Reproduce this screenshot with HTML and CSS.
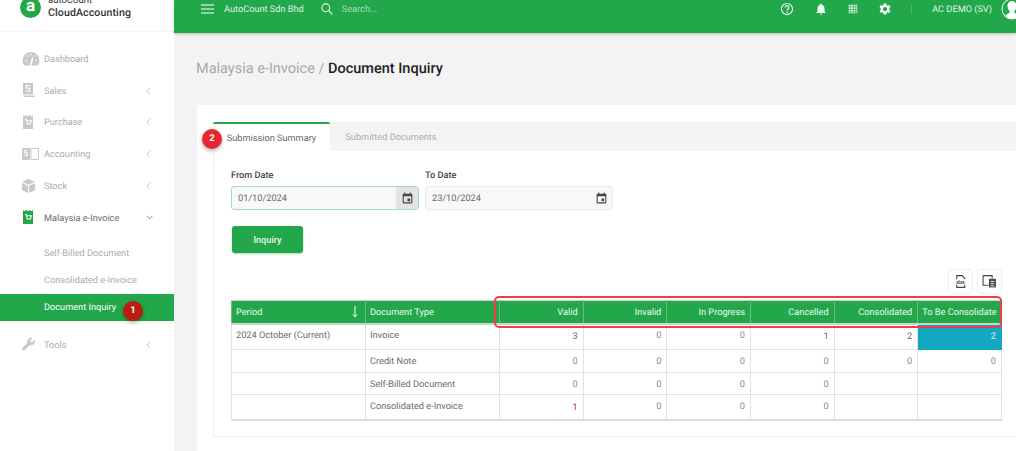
FILE: index.html
```html
<!DOCTYPE html>
<html lang="en">
<head>
<meta charset="utf-8">
<title>Document Inquiry</title>
<link rel="stylesheet" href="styles.css">
</head>
<body>
<aside class="sidebar">
  <div class="brand">
    <span class="brand-mark">a</span>
    <span class="brand-text"><span class="brand-top">autoCount</span><strong>CloudAccounting</strong></span>
  </div>
  <nav class="nav">
    <a class="nav-item">
      <svg class="nav-icon" viewBox="0 0 18 15"><path d="M9 1a8.5 8.5 0 0 0-8.500 8.500c0 2 .7 3.800 1.800 5h13.400a8 8 0 0 0 1.800-5A8.500 8.500 0 0 0 9 1z"/><path class="cut" d="M9 14l1.500-7M4 9.500h.1M5.500 5h.1M12.500 5h.1M14.300 9.500h.1M9 3.500h.1"/></svg>
      <span class="nav-label">Dashboard</span>
    </a>
    <a class="nav-item">
      <svg class="nav-icon" viewBox="0 0 18 15"><path d="M1 0h10v11.500H1zM2.500 12.500H13V14H1z"/><path class="cut thin" d="M8 2.500H4.200v2.700h3.600v2.800H4"/></svg>
      <span class="nav-label">Sales</span>
      <svg class="chev" viewBox="0 0 6 10"><path d="M5 1L1 5l4 4"/></svg>
    </a>
    <a class="nav-item">
      <svg class="nav-icon" viewBox="0 0 18 15"><path d="M1 0l1.700 1.300L4.300 0 6 1.300 7.700 0l1.600 1.300L11 0v14H1z"/><path class="cut thin" d="M3 4.500h1.300l1 4.500h3.200l.8-3.300H5"/></svg>
      <span class="nav-label">Purchase</span>
      <svg class="chev" viewBox="0 0 6 10"><path d="M5 1L1 5l4 4"/></svg>
    </a>
    <a class="nav-item">
      <svg class="nav-icon" viewBox="0 0 18 15"><path d="M0 1h8v12H0z"/><path class="cut thin" d="M5.500 3.500H2.800v2.500h2.500v2.500H2.700"/><path class="line" d="M9 1.500h7.500v11H9z"/></svg>
      <span class="nav-label">Accounting</span>
      <svg class="chev" viewBox="0 0 6 10"><path d="M5 1L1 5l4 4"/></svg>
    </a>
    <a class="nav-item">
      <svg class="nav-icon" viewBox="0 0 18 15"><path d="M6.500 0L13 2.800 6.500 5.800 0 2.800z"/><path d="M0 4l6 2.800V14L0 11zM13 4L7 6.800V14l6-3z"/></svg>
      <span class="nav-label">Stock</span>
      <svg class="chev" viewBox="0 0 6 10"><path d="M5 1L1 5l4 4"/></svg>
    </a>
    <a class="nav-item is-open">
      <svg class="nav-icon" viewBox="0 0 18 15"><path d="M1 0l1.700 1.300L4.300 0 6 1.300 7.700 0l1.600 1.300L11 0v14H1z"/><path class="cut thin" d="M3 4.500h1.300l1 4.500h3.200l.8-3.300H5"/></svg>
      <span class="nav-label">Malaysia e-Invoice</span>
      <svg class="chev chev-down" viewBox="0 0 10 6"><path d="M1 1l4 4 4-4"/></svg>
    </a>
    <div class="subnav">
      <a class="sub-item">Self-Billed Document</a>
      <a class="sub-item">Consolidated e-Invoice</a>
      <a class="sub-item is-active">Document Inquiry<span class="badge badge-dark">1</span></a>
    </div>
    <a class="nav-item">
      <svg class="nav-icon" viewBox="0 0 18 15"><g transform="translate(13.500 0) scale(-.6 .6)"><path d="M22.700 19l-9.100-9.100c.9-2.300.4-5-1.500-6.900-2-2-5-2.400-7.400-1.300L9 6 6 9 1.600 4.700C.4 7.100.9 10.100 2.900 12.100c1.900 1.900 4.600 2.400 6.900 1.500l9.100 9.100c.4.4 1 .4 1.400 0l2.300-2.300c.5-.4.5-1.100.1-1.400z"/></g></svg>
      <span class="nav-label">Tools</span>
      <svg class="chev" viewBox="0 0 6 10"><path d="M5 1L1 5l4 4"/></svg>
    </a>
  </nav>
</aside>

<div class="main">
  <header class="topbar">
    <svg class="tb-menu" viewBox="0 0 13 10"><path d="M0 1h13M0 5h13M0 9h13"/></svg>
    <span class="tb-company">AutoCount Sdn Bhd</span>
    <svg class="tb-search" viewBox="0 0 12 12"><circle cx="4.800" cy="4.800" r="3.900"/><path d="M7.700 7.700l3.700 3.700"/></svg>
    <span class="tb-placeholder">Search...</span>
    <div class="tb-right">
      <svg class="tb-icon tb-help" viewBox="0 0 24 24"><circle class="ring" cx="12" cy="12" r="9.500"/><path class="ring" d="M8.800 9.500a3.200 3.200 0 1 1 4.900 2.700c-1 .7-1.700 1.200-1.700 2.600"/><circle cx="12" cy="17.500" r="1.300"/></svg>
      <svg class="tb-icon" viewBox="0 0 24 24"><path d="M12 22c1.100 0 2-.9 2-2h-4c0 1.100.9 2 2 2zm6-6v-5c0-3.070-1.630-5.640-4.500-6.320V4c0-.83-.67-1.500-1.500-1.500s-1.500.67-1.500 1.500v.68C7.640 5.360 6 7.920 6 11v5l-2 2v1h16v-1l-2-2z"/></svg>
      <svg class="tb-icon" viewBox="-3 -3 31 31"><path d="M3 3h4v4H3zM8.500 3h4v4h-4zM14 3h4v4h-4zM19.500 3H22v4h-2.500zM3 8.500h4v4H3zM8.500 8.500h4v4h-4zM14 8.500h4v4h-4zM19.500 8.500H22v4h-2.500zM3 14h4v4H3zM8.500 14h4v4h-4zM14 14h4v4h-4zM19.500 14H22v4h-2.500zM3 19.500h4V22H3zM8.500 19.500h4V22h-4zM14 19.500h4V22h-4zM19.500 19.500H22V22h-2.500z"/></svg>
      <svg class="tb-icon" viewBox="0 0 24 24"><path d="M19.140 12.940c.04-.3.060-.61.060-.94 0-.32-.02-.64-.07-.94l2.030-1.580c.18-.14.23-.41.120-.61l-1.920-3.320c-.12-.22-.37-.29-.59-.22l-2.390.96c-.5-.38-1.030-.7-1.620-.94l-.36-2.540c-.04-.24-.24-.41-.48-.41h-3.840c-.24 0-.43.17-.47.41l-.36 2.540c-.59.24-1.130.57-1.620.94l-2.390-.96c-.22-.08-.47 0-.59.22L2.740 8.870c-.12.21-.08.47.12.61l2.030 1.580c-.05.3-.09.63-.09.94s.02.64.07.94l-2.030 1.580c-.18.14-.23.41-.12.61l1.920 3.320c.12.22.37.29.59.22l2.390-.96c.5.38 1.030.7 1.620.94l.36 2.540c.05.24.24.41.48.41h3.840c.24 0 .44-.17.47-.41l.36-2.540c.59-.24 1.130-.56 1.620-.94l2.390.96c.22.08.47 0 .59-.22l1.920-3.320c.12-.22.070-.47-.12-.61l-2.010-1.580zM12 15.600c-1.980 0-3.600-1.620-3.600-3.600s1.620-3.600 3.600-3.600 3.600 1.620 3.600 3.600-1.620 3.600-3.600 3.600z"/></svg>
      <span class="tb-divider"></span>
      <span class="tb-user">AC DEMO (SV)</span>
      <svg class="tb-avatar" viewBox="0 0 22 22"><circle class="av-ring" cx="11" cy="11" r="10"/><path d="M11 3c3 0 4.500 2.300 4.500 5 0 2-.8 3.800-2 5v2c2 .8 3.700 1.500 4.700 3a10 10 0 0 1-14.400 0c1-1.500 2.700-2.200 4.700-3v-2c-1.200-1.200-2-3-2-5 0-2.700 1.500-5 4.500-5z"/></svg>
    </div>
  </header>

  <div class="content">
    <h1 class="page-title">Malaysia e-Invoice / <strong>Document Inquiry</strong></h1>
    <section class="card">
      <div class="tabs">
        <div class="tab tab-active">Submission Summary<span class="badge badge-red">2</span></div>
        <div class="tab tab-idle">Submitted Documents</div>
      </div>
      <div class="panel">
        <div class="filters">
          <div class="field">
            <label class="field-label">From Date</label>
            <div class="date-input is-focused">
              <span class="date-value">01/10/2024</span>
              <span class="date-btn is-hover"><svg class="cal" viewBox="0 0 24 24"><path d="M17 12h-5v5h5v-5zM16 1v2H8V1H6v2H5c-1.110 0-1.990.9-1.990 2L3 19c0 1.100.89 2 2 2h14c1.100 0 2-.9 2-2V5c0-1.100-.9-2-2-2h-1V1h-2zm3 18H5V8h14v11z"/></svg></span>
            </div>
          </div>
          <div class="field">
            <label class="field-label">To Date</label>
            <div class="date-input">
              <span class="date-value">23/10/2024</span>
              <span class="date-btn"><svg class="cal" viewBox="0 0 24 24"><path d="M17 12h-5v5h5v-5zM16 1v2H8V1H6v2H5c-1.110 0-1.990.9-1.990 2L3 19c0 1.100.89 2 2 2h14c1.100 0 2-.9 2-2V5c0-1.100-.9-2-2-2h-1V1h-2zm3 18H5V8h14v11z"/></svg></span>
            </div>
          </div>
        </div>
        <button class="inquiry-btn" type="button">Inquiry</button>
        <div class="grid-tools">
          <button class="tool-btn" type="button"><svg class="tool-icon" viewBox="0 0 14 14"><path class="tool-line" d="M3.500 5V1.500h5l2.500 2.500V5M3.500 10v2.500h7.500V10"/><text class="tool-text" x="7" y="9.300">xlsx</text></svg></button>
          <button class="tool-btn" type="button"><svg class="tool-icon" viewBox="0 0 14 14"><path class="tool-line" d="M1 1.500h8.500V4M6 10.500H1v-9"/><path class="tool-fill" d="M6.500 4.500h6.500v8H6.500z"/><path class="tool-cut" d="M8 7h3.500M8 9h3.500M8 11h3.500"/></svg></button>
        </div>
        <div class="table-wrap">
          <table class="summary">
            <thead>
              <tr>
                <th class="col-text col-period">Period<svg class="sort" viewBox="0 0 6 12"><path d="M3 0v11M1 8.500L3 11l2-2.500"/></svg></th>
                <th class="col-text col-type">Document Type</th>
                <th class="col-num">Valid</th>
                <th class="col-num">Invalid</th>
                <th class="col-num">In Progress</th>
                <th class="col-num">Cancelled</th>
                <th class="col-num">Consolidated</th>
                <th class="col-num col-last">To Be Consolidate</th>
              </tr>
            </thead>
            <tbody>
              <tr class="row-a">
                <td class="col-text">2024 October (Current)</td><td class="col-text">Invoice</td>
                <td class="num low">3</td><td class="num">0</td><td class="num">0</td><td class="num low">1</td><td class="num low">2</td><td class="num low is-flag">2</td>
              </tr>
              <tr class="row-b">
                <td></td><td class="col-text">Credit Note</td>
                <td class="num">0</td><td class="num">0</td><td class="num">0</td><td class="num">0</td><td class="num">0</td><td class="num">0</td>
              </tr>
              <tr class="row-b">
                <td></td><td class="col-text">Self-Billed Document</td>
                <td class="num">0</td><td class="num">0</td><td class="num">0</td><td class="num">0</td><td></td><td></td>
              </tr>
              <tr class="row-c">
                <td></td><td class="col-text">Consolidated e-Invoice</td>
                <td class="num low is-red">1</td><td class="num">0</td><td class="num">0</td><td class="num">0</td><td></td><td></td>
              </tr>
            </tbody>
          </table>
          <div class="callout"></div>
        </div>
      </div>
    </section>
  </div>
</div>
</body>
</html>
```
FILE: styles.css
```css
* { box-sizing: border-box; }
html, body { height: 100%; }
body {
  margin: 0;
  display: flex;
  overflow: hidden;
  background: #f3f3f4;
  font-family: Roboto, "Liberation Sans", sans-serif;
  font-size: 9.2px;
  color: #666;
  text-rendering: geometricPrecision;
}

/* sidebar */
.sidebar { flex: 0 0 174px; background: #fff; height: 100%; }
.brand {
  height: 32px;
  display: flex;
  align-items: flex-end;
  gap: 6px;
  padding: 0 0 13px 20px;
  border-bottom: 1px solid #f5f5f5;
  overflow: hidden;
}
.brand-mark {
  flex: 0 0 21px;
  height: 21px;
  border-radius: 50%;
  background: #22a84b;
  color: #fff;
  font-size: 17px;
  font-weight: 700;
  line-height: 19px;
  text-align: center;
}
.brand-text { display: flex; flex-direction: column; font-size: 10.6px; line-height: 12px; color: #333; margin-bottom: -1px; margin-left: 1px; }
.brand-top { font-size: 9.5px; }
.brand-text strong { font-weight: 500; letter-spacing: .1px; }

.nav { padding-top: 11px; }
.nav-item {
  height: 31.8px;
  display: flex;
  align-items: center;
  padding-left: 22px;
  color: #a9acb0;
}
.nav-icon { flex: 0 0 18px; width: 18px; height: 15px; margin-right: 4px; fill: #c6cacf; }
.nav-icon .cut { fill: none; stroke: #fff; stroke-width: 1.6; stroke-linecap: round; }
.nav-icon .thin { stroke-width: 1.100; stroke-linecap: butt; }
.nav-icon .line { fill: none; stroke: #c6cacf; stroke-width: 1; }
.nav-label { flex: 1; padding-top: 1px; }
.chev { width: 5px; height: 8px; margin-right: 23px; fill: none; stroke: #b4b7bb; stroke-width: 1; }
.chev-down { width: 7px; height: 5px; margin-right: 21px; stroke: #555; }
.is-open { color: #6b6e72; }
.is-open .nav-icon { fill: #22a84b; }
.subnav { margin: 6px 0 8px; }
.sub-item {
  display: flex;
  align-items: center;
  height: 27px;
  padding: 1px 0 0 44px;
  color: #a9acb0;
  position: relative;
}
.sub-item.is-active { background: #22a84b; color: #fff; }

/* badges over content */
.badge {
  position: absolute;
  width: 20px;
  height: 20px;
  border-radius: 50%;
  color: #fff;
  font-size: 9.500px;
  font-weight: 700;
  line-height: 20px;
  text-align: center;
  box-shadow: 0 2px 4px rgba(0, 0, 0, .3);
}
.badge-dark { background: #b81d10; left: 123px; top: 7px; }
.badge-red { background: #e6272f; left: -11px; top: 5px; }

/* main column */
.main { flex: 1; min-width: 0; display: flex; flex-direction: column; }
.topbar {
  flex: 0 0 33px;
  display: flex;
  align-items: flex-start;
  padding: 0 0 0 27px;
  background: #22a84b;
  color: #dff3e5;
  box-shadow: 0 1px 3px rgba(0, 0, 0, .22);
  position: relative;
}
.tb-menu { width: 13px; height: 10px; margin-top: 4px; fill: none; stroke: #fff; stroke-width: 1.200; }
.tb-company { margin-left: 10px; line-height: 19px; }
.tb-search { width: 12px; height: 12px; margin: 3px 0 0 17px; fill: none; stroke: #e9f7ee; stroke-width: 1.100; }
.tb-placeholder { margin-left: 9px; line-height: 19px; color: #a9dcb9; }
.tb-right { margin-left: auto; display: flex; align-items: flex-start; }
.tb-icon { width: 14px; height: 14px; margin: 2px 18px 0 0; fill: #f2fbf5; }
.tb-help { margin-right: 20px; }
.tb-icon .ring { fill: none; stroke: #f2fbf5; stroke-width: 2; }
.tb-divider { width: 1px; height: 9px; margin: 5px 20px 0 1px; background: #4dbb6e; }
.tb-user { line-height: 19px; white-space: nowrap; }
.tb-avatar { width: 22px; height: 22px; margin: -2px -7px 0 9px; fill: #fff; flex: none; }
.tb-avatar .av-ring { fill: #22a84b; stroke: #fff; stroke-width: 1; }

.content { flex: 1; min-height: 0; padding: 0 0 0 23px; overflow: hidden; }
.page-title {
  margin: 26px 0 0 -1px;
  height: 19px;
  font-size: 14.500px;
  line-height: 19px;
  font-weight: 400;
  color: #a6a9ad;
  white-space: nowrap;
}
.page-title strong { color: #222; font-weight: 500; }

.card { width: 830px; height: 346px; margin-top: 27px; padding: 17px 0 0 16px; background: #fff; }
.tabs { display: flex; height: 29px; background: #f4f4f4; }
.tab {
  width: 117px;
  padding-top: 10px;
  text-align: center;
  color: #a9acb0;
  position: relative;
}
.tab-idle { padding-left: 5px; }
.tab-active {
  height: 31px;
  padding-top: 9px;
  background: #fff;
  border-top: 2px solid #22a84b;
  border-radius: 2px 2px 0 0;
  color: #666;
  z-index: 1;
}
.panel {
  height: 286px;
  padding: 17px 0 0 17px;
  border-left: 1px solid #ececec;
  border-bottom: 1px solid #ececec;
}
.filters { display: flex; gap: 6px; }
.field { width: 188px; }
.field-label { display: block; height: 18px; padding-top: 2px; font-weight: 500; color: #444; line-height: 12px; }
.date-input {
  height: 24px;
  display: flex;
  align-items: center;
  background: #f8f8f8;
  border: 1px solid #eaeaea;
  border-radius: 3px;
  color: #666;
}
.is-focused { border-color: #a3dcb3; }
.date-value { flex: 1; padding-left: 6px; }
.date-btn { flex: 0 0 22px; height: 100%; display: flex; align-items: center; justify-content: center; }
.is-hover { background: #e4e4e4; }
.cal { width: 13px; height: 13px; fill: #444; }
.inquiry-btn {
  display: block;
  width: 71px;
  height: 27px;
  margin: 16px 0 0 1px;
  padding: 0;
  background: #22a84b;
  border: 0;
  border-radius: 3px;
  box-shadow: 0 1px 2px #a7dcb6;
  color: #e7f6ec;
  font: 500 9.200px Roboto, "Liberation Sans", sans-serif;
}
.grid-tools { width: 771px; display: flex; justify-content: flex-end; gap: 4px; margin-top: 16px; }
.tool-btn {
  width: 25px;
  height: 25px;
  display: flex;
  align-items: center;
  justify-content: center;
  padding: 0;
  background: #fff;
  border: 1px solid #eee;
  border-radius: 3px;
}
.tool-icon { width: 15px; height: 15px; }
.tool-line { fill: none; stroke: #444; stroke-width: 1; }
.tool-fill { fill: #444; }
.tool-cut { stroke: #fff; stroke-width: .8; }
.tool-text { font-family: Roboto, sans-serif; font-size: 4.500px; font-weight: 700; fill: #444; text-anchor: middle; }

.table-wrap { position: relative; margin-top: 6px; width: 771px; }
.summary {
  width: 771px;
  table-layout: fixed;
  border-collapse: collapse;
  border: 1px solid #ddd;
  border-bottom-width: 2px;
}
.summary th {
  height: 23px;
  padding: 1px 4px 0;
  background: #22a84b;
  border: 1px solid #63c081;
  border-top: 1px solid #cfd3d0;
  border-bottom: 2px solid #c9d6cd;
  color: #eef9f2;
  font-weight: 400;
  font-size: 9.200px;
  white-space: nowrap;
}
.col-period { position: relative; }
.col-period, .col-type { width: 134px; }
.col-text { text-align: left; }
.col-num { text-align: right; }
.summary th.col-num { padding-right: 5px; }
.sort { position: absolute; right: 7px; top: 5px; width: 6px; height: 12px; fill: none; stroke: #fff; stroke-width: 1; }
.summary td {
  padding: 0 4px;
  border: 1px solid #e2e2e2;
  color: #6a6a6a;
  font-size: 9.200px;
  white-space: nowrap;
  vertical-align: top;
}
.row-a td { height: 26px; padding-top: 5px; }
.row-b td { height: 22.500px; padding-top: 6px; }
.row-c td { height: 25.500px; padding-top: 6px; }
.summary td.num { text-align: right; color: #8a8a8a; padding-right: 5px; }
.summary td.low { color: #666; }
.row-a td.low { padding-top: 6px; }
.row-c td.low { padding-top: 7px; }
.summary td.is-flag { background: #13a7c1; border-color: #13a7c1; color: #e4f6f9; }
.summary td.is-red { color: #a33; }
.callout {
  position: absolute;
  left: 263px;
  top: -4px;
  width: 508px;
  height: 32px;
  border: 2px solid #ee3f48;
  border-radius: 5px;
  pointer-events: none;
}
```
